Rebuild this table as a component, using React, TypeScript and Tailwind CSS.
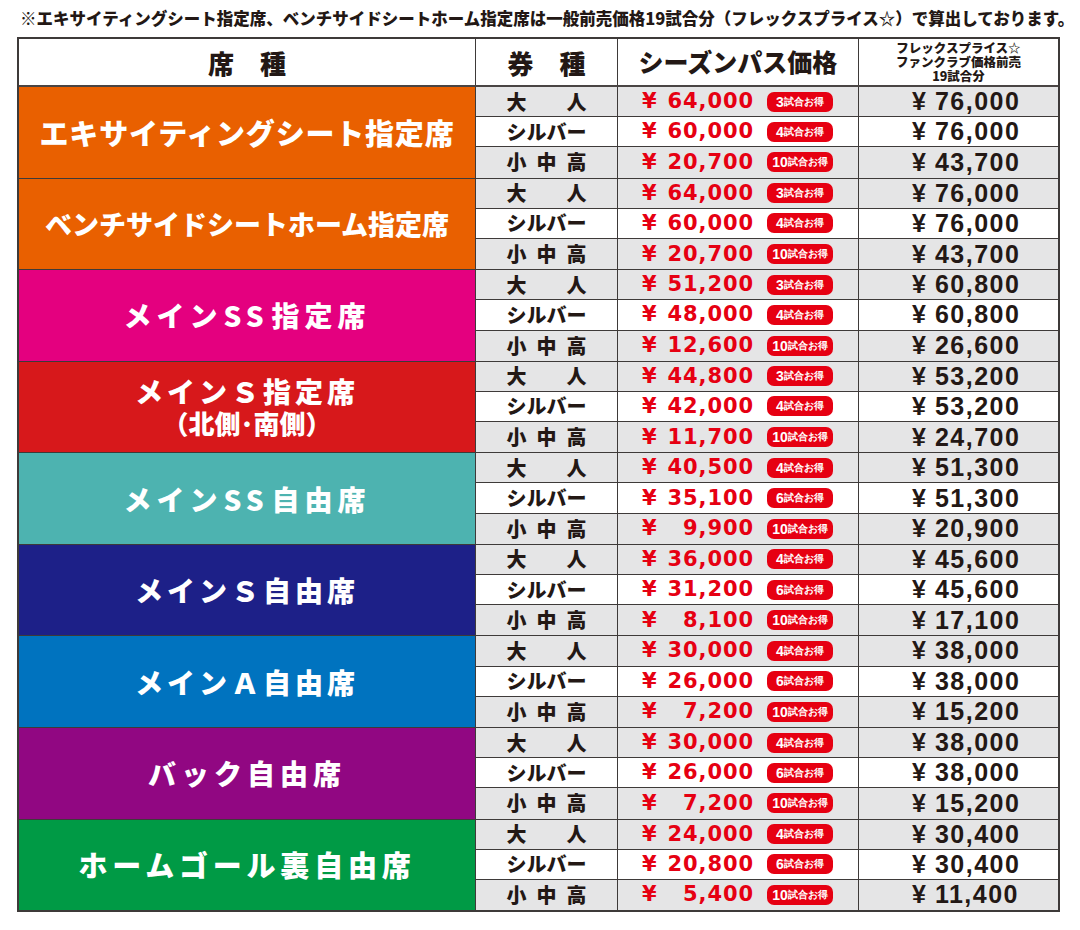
import React from "react";

type Row = [string, string, string];

interface Group {
  name: React.ReactNode;
  bg: string;
  nameCls: string;
  rows: Row[];
}

const types: string[][] = [["大", "人"], ["シ", "ル", "バ", "ー"], ["小", "中", "高"]];

const groups: Group[] = [
  {
    name: "エキサイティングシート指定席",
    bg: "bg-[#e96000]",
    nameCls: "text-[29px] tracking-[0.8px]",
    rows: [["64,000", "3", "76,000"], ["60,000", "4", "76,000"], ["20,700", "10", "43,700"]],
  },
  {
    name: "ベンチサイドシートホーム指定席",
    bg: "bg-[#e96000]",
    nameCls: "text-[27px]",
    rows: [["64,000", "3", "76,000"], ["60,000", "4", "76,000"], ["20,700", "10", "43,700"]],
  },
  {
    name: (
      <span>
        メイン<span className="pl-[1px] pr-[3px] tracking-[5px]">SS</span>指定席
      </span>
    ),
    bg: "bg-[#e4007f]",
    nameCls: "text-[28px] tracking-[5px]",
    rows: [["51,200", "3", "60,800"], ["48,000", "4", "60,800"], ["12,600", "10", "26,600"]],
  },
  {
    name: (
      <>
        <span className="block text-[28px] leading-[31px] tracking-[4px]">メインＳ指定席</span>
        <span className="block text-[26px] leading-[31px]">（北側･南側）</span>
      </>
    ),
    bg: "bg-[#d7181b]",
    nameCls: "",
    rows: [["44,800", "3", "53,200"], ["42,000", "4", "53,200"], ["11,700", "10", "24,700"]],
  },
  {
    name: (
      <span>
        メイン<span className="pl-[1px] pr-[3px] tracking-[5px]">SS</span>自由席
      </span>
    ),
    bg: "bg-[#4db3b0]",
    nameCls: "text-[28px] tracking-[5px]",
    rows: [["40,500", "4", "51,300"], ["35,100", "6", "51,300"], ["9,900", "10", "20,900"]],
  },
  {
    name: "メインＳ自由席",
    bg: "bg-[#1d2088]",
    nameCls: "text-[28px] tracking-[4px]",
    rows: [["36,000", "4", "45,600"], ["31,200", "6", "45,600"], ["8,100", "10", "17,100"]],
  },
  {
    name: "メインＡ自由席",
    bg: "bg-[#0073bf]",
    nameCls: "text-[28px] tracking-[4px]",
    rows: [["30,000", "4", "38,000"], ["26,000", "6", "38,000"], ["7,200", "10", "15,200"]],
  },
  {
    name: "バック自由席",
    bg: "bg-[#910782]",
    nameCls: "text-[28px] tracking-[5px]",
    rows: [["30,000", "4", "38,000"], ["26,000", "6", "38,000"], ["7,200", "10", "15,200"]],
  },
  {
    name: "ホームゴール裏自由席",
    bg: "bg-[#009a45]",
    nameCls: "text-[29px] tracking-[4.8px]",
    rows: [["24,000", "4", "30,400"], ["20,800", "6", "30,400"], ["5,400", "10", "11,400"]],
  },
];

function Badge({ n }: { n: string }) {
  return (
    <span className="ml-[13px] flex h-[20px] w-[66px] items-center justify-center rounded-[7px] bg-[#e60012] text-white">
      <span className="font-['Liberation_Sans'] text-[14px] font-bold leading-none">{n}</span>
      <span className="text-[10px] font-black leading-none">試合お得</span>
    </span>
  );
}

export default function App() {
  return (
    <div className="h-[930px] w-[1080px] bg-white font-['Noto_Sans_CJK_JP',sans-serif] text-[#231815]">
      <p className="h-[37px] whitespace-nowrap pl-[20px] pt-[8px] text-[16.5px] font-black leading-[20px]">
        ※エキサイティングシート指定席、ベンチサイドシートホーム指定席は一般前売価格19試合分（フレックスプライス☆）で算出しております。
      </p>

      <div className="ml-[17px] w-[1043px] border-2 border-[#3e3a39]">
        {/* header */}
        <div className="flex h-[48px] border-b-2 border-[#4a4544]">
          <div className="flex w-[456px] items-center justify-center text-[26px] font-black">席　種</div>
          <div className="flex w-[142px] items-center justify-center border-l border-[#3e3a39] text-[26px] font-black">券　種</div>
          <div className="flex w-[241px] items-center justify-center border-l border-[#3e3a39] text-[25px] font-black">シーズンパス価格</div>
          <div className="flex w-[200px] flex-col items-center justify-center border-l border-[#3e3a39] text-[12.5px] font-black leading-[14px]">
            <div className="h-[14px]">フレックスプライス☆</div>
            <div className="h-[14px]">ファンクラブ価格前売</div>
            <div className="h-[14px]">19試合分</div>
          </div>
        </div>

        {groups.map((g, gi) => (
          <div key={gi} className={`flex ${gi < groups.length - 1 ? "border-b border-[#3e3a39]" : ""}`}>
            <div className={`flex w-[456px] flex-col items-center justify-center text-center font-black text-white ${g.bg} ${g.nameCls}`}>
              {g.name}
            </div>
            <div className="w-[583px]">
              {g.rows.map((r, ri) => (
                <div
                  key={ri}
                  className={`flex h-[30.2px] ${ri === 1 ? "bg-white" : "bg-[#e5e5e6]"} ${ri < 2 ? "border-b border-[#3e3a39]" : ""}`}
                >
                  <div className="flex w-[142px] items-center justify-center border-l border-[#3e3a39]">
                    <span className="flex w-[80px] justify-between text-[20px] font-black leading-none">
                      {types[ri].map((c, ci) => (
                        <span key={ci}>{c}</span>
                      ))}
                    </span>
                  </div>
                  <div className="flex w-[241px] items-center border-l border-[#3e3a39] pl-[24px] font-['DejaVu_Sans'] font-bold text-[#e60012]">
                    <span className="w-[15px] text-[21px] leading-none">¥</span>
                    <span className="w-[97px] text-right text-[21px] leading-none tracking-[0.9px]">{r[0]}</span>
                    <Badge n={r[1]} />
                  </div>
                  <div className="flex w-[200px] items-center border-l border-[#3e3a39] pl-[53px] font-['Liberation_Sans'] font-bold">
                    <span className="text-[25px] leading-none">¥</span>
                    <span className="ml-[9px] text-[25px] leading-none tracking-[1.5px]">{r[2]}</span>
                  </div>
                </div>
              ))}
            </div>
          </div>
        ))}
      </div>
    </div>
  );
}
